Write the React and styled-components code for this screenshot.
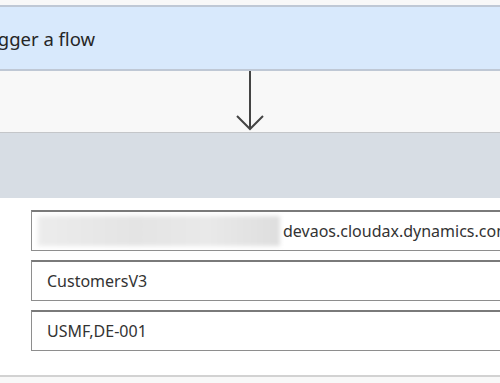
import React from 'react'
import styled, { createGlobalStyle } from 'styled-components'

const Global = createGlobalStyle`
    html, body {
        margin: 0;
        background: #f8f8f8;
        overflow: hidden;
        font-family: 'Noto Sans', 'Open Sans', sans-serif;
    }
`

const Canvas = styled.div`
    display: flex;
    flex-direction: column;
    width: 500px;
    height: 383px;
    padding-top: 5px;
    box-sizing: border-box;
    overflow: hidden;
`

const TriggerCard = styled.div`
    display: flex;
    align-items: center;
    height: 62px;
    background: #d8e9fc;
    border-top: 2px solid #bfc8d5;
    border-bottom: 2px solid #bfc8d5;
`

const Title = styled.span`
    margin-left: -24px;
    font-size: 18.5px;
    color: #262626;
    white-space: nowrap;
`

const Connector = styled.div`
    display: flex;
    justify-content: center;
    height: 61px;
`

const ActionCard = styled.div`
    display: flex;
    flex-direction: column;
    border-top: 1px solid #c4c6c9;
    border-bottom: 2px solid #d2d2d2;
`

const ActionHeader = styled.div`
    height: 65px;
    background: #d7dde4;
`

const Fields = styled.div`
    display: flex;
    flex-direction: column;
    gap: 9px;
    padding: 12px 0 24px 31px;
    background: #fff;
`

const Field = styled.div`
    display: flex;
    align-items: center;
    width: 520px;
    height: 41px;
    box-sizing: border-box;
    padding-left: ${p => p.$pad || 15}px;
    border: 1px solid #8e8e8e;
    border-top: 2px solid #7a7a7a;
    background: #fff;
    font-size: 16px;
    color: #333;
    white-space: nowrap;
    overflow: hidden;
`

const Blur = styled.span`
    display: inline-block;
    flex: none;
    width: 242px;
    height: 30px;
    margin-right: 3px;
    background: linear-gradient(90deg, #ececec, #e4e4e4 40%, #e9e9e9 70%, #dedede);
    filter: blur(2px);
`

const Arrow = () => (
    <svg width="30" height="61" viewBox="0 0 30 61">
        <path d="M15 0 V58 M2 45 L15 58 L28 45" fill="none" stroke="#444" strokeWidth="2" />
    </svg>
)

const App = () => (
    <>
        <Global />
        <Canvas>
            <TriggerCard>
                <Title>Trigger a flow</Title>
            </TriggerCard>
            <Connector><Arrow /></Connector>
            <ActionCard>
                <ActionHeader />
                <Fields>
                    <Field $pad={6}><Blur />devaos.cloudax.dynamics.com</Field>
                    <Field>CustomersV3</Field>
                    <Field>USMF,DE-001</Field>
                </Fields>
            </ActionCard>
        </Canvas>
    </>
)

export default App
